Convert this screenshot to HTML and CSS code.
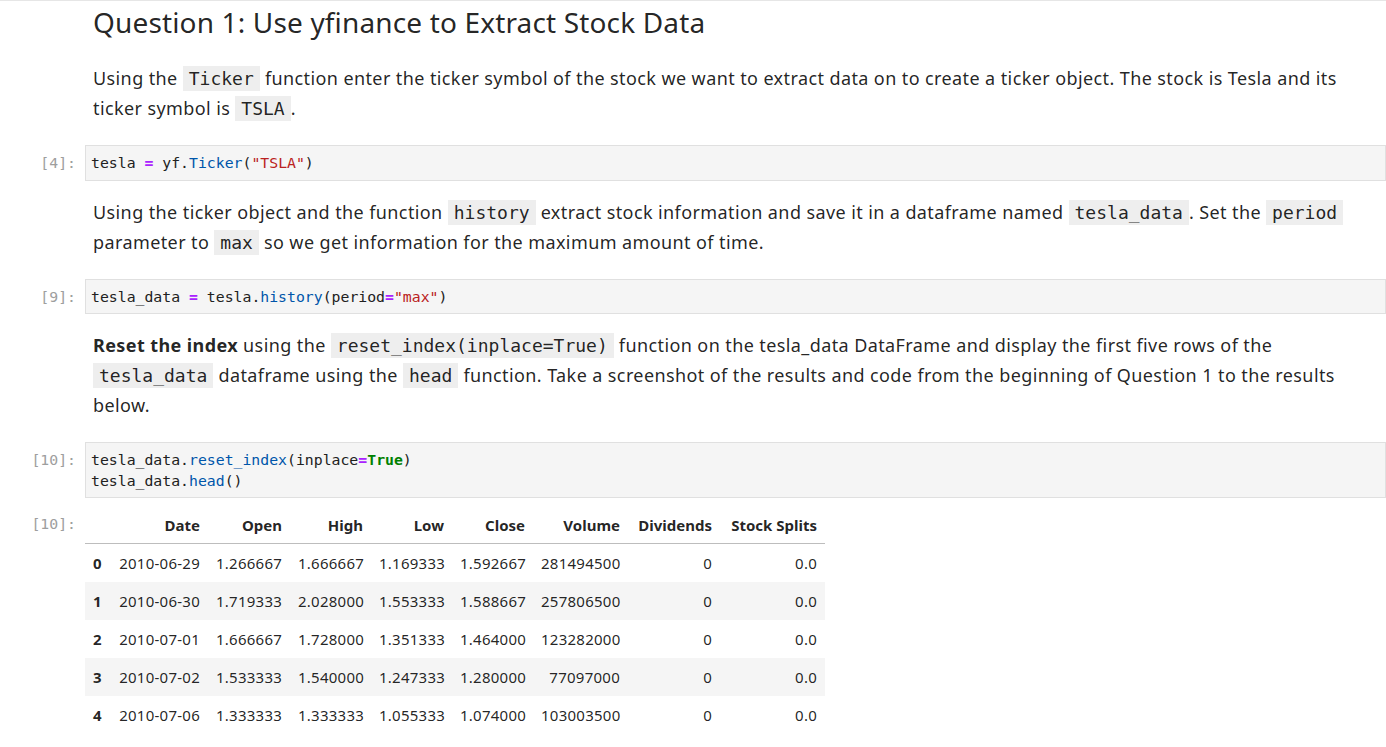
FILE: index.html
```html
<!DOCTYPE html>
<html>
<head>
<meta charset="utf-8">
<link rel="stylesheet" href="styles.css">
</head>
<body>
<div class="notebook">
  <div class="cell md first">
    <div class="prompt"></div>
    <div class="content">
      <h2 class="title">Question 1: Use yfinance to Extract Stock Data</h2>
    </div>
  </div>

  <div class="cell md gap-lg">
    <div class="prompt"></div>
    <div class="content">
      <p>Using the <code>Ticker</code> function enter the ticker symbol of the stock we want to extract data on to create a ticker object. The stock is Tesla and its ticker symbol is <code>TSLA</code>.</p>
    </div>
  </div>

  <div class="cell code">
    <div class="prompt">[4]:</div>
    <div class="editor"><pre>tesla <span class="o">=</span> yf<span class="p">.</span><span class="f">Ticker</span>(<span class="s">"TSLA"</span>)</pre></div>
  </div>

  <div class="cell md">
    <div class="prompt"></div>
    <div class="content">
      <p>Using the ticker object and the function <code>history</code> extract stock information and save it in a dataframe named <code>tesla_data</code>. Set the <code>period</code> parameter to <code>max</code> so we get information for the maximum amount of time.</p>
    </div>
  </div>

  <div class="cell code">
    <div class="prompt">[9]:</div>
    <div class="editor"><pre>tesla_data <span class="o">=</span> tesla<span class="p">.</span><span class="f">history</span>(period<span class="o">=</span><span class="s">"max"</span>)</pre></div>
  </div>

  <div class="cell md">
    <div class="prompt"></div>
    <div class="content">
      <p><b>Reset the index</b> using the <code>reset_index(inplace=True)</code> function on the tesla_data DataFrame and display the first five rows of the <code>tesla_data</code> dataframe using the <code>head</code> function. Take a screenshot of the results and code from the beginning of Question 1 to the results below.</p>
    </div>
  </div>

  <div class="cell code">
    <div class="prompt">[10]:</div>
    <div class="editor"><pre>tesla_data<span class="p">.</span><span class="f">reset_index</span>(inplace<span class="o">=</span><span class="k">True</span>)
tesla_data<span class="p">.</span><span class="f">head</span>()</pre></div>
  </div>

  <div class="cell output">
    <div class="prompt out">[10]:</div>
    <div class="result">
      <table class="df">
        <colgroup>
          <col class="c-idx"><col class="c-date"><col class="c-num"><col class="c-num2"><col class="c-num2"><col class="c-num2"><col class="c-vol"><col class="c-div"><col class="c-split">
        </colgroup>
        <thead>
          <tr><th></th><th>Date</th><th>Open</th><th>High</th><th>Low</th><th>Close</th><th>Volume</th><th>Dividends</th><th>Stock Splits</th></tr>
        </thead>
        <tbody>
          <tr><th>0</th><td>2010-06-29</td><td>1.266667</td><td>1.666667</td><td>1.169333</td><td>1.592667</td><td>281494500</td><td>0</td><td>0.0</td></tr>
          <tr><th>1</th><td>2010-06-30</td><td>1.719333</td><td>2.028000</td><td>1.553333</td><td>1.588667</td><td>257806500</td><td>0</td><td>0.0</td></tr>
          <tr><th>2</th><td>2010-07-01</td><td>1.666667</td><td>1.728000</td><td>1.351333</td><td>1.464000</td><td>123282000</td><td>0</td><td>0.0</td></tr>
          <tr><th>3</th><td>2010-07-02</td><td>1.533333</td><td>1.540000</td><td>1.247333</td><td>1.280000</td><td>77097000</td><td>0</td><td>0.0</td></tr>
          <tr><th>4</th><td>2010-07-06</td><td>1.333333</td><td>1.333333</td><td>1.055333</td><td>1.074000</td><td>103003500</td><td>0</td><td>0.0</td></tr>
        </tbody>
      </table>
    </div>
  </div>
</div>
</body>
</html>
```

FILE: styles.css
```css
html, body {
  margin: 0;
  padding: 0;
  background: #ffffff;
}

body {
  font-family: "Noto Sans", "Open Sans", sans-serif;
  color: rgba(0, 0, 0, 0.87);
  overflow: hidden;
}

.notebook {
  border-top: 1px solid #e6e6e6;
  width: 1386px;
}

.cell {
  display: flex;
  align-items: flex-start;
}

.prompt {
  flex: 0 0 85px;
  width: 85px;
  box-sizing: border-box;
  padding-right: 9px;
  text-align: right;
  font-family: "DejaVu Sans Mono", monospace;
  font-size: 14.8px;
  line-height: 20.5px;
  color: #9e9e9e;
}

.content {
  flex: 1 1 auto;
  padding-left: 8px;
  padding-right: 20px;
  min-width: 0;
}

.title {
  margin: 4px 0 0 0;
  font-size: 28px;
  font-weight: 400;
  line-height: 34px;
  letter-spacing: 0.15px;
}

.md p {
  margin: 0;
  font-size: 18px;
  line-height: 30px;
  letter-spacing: 0.4px;
}

.md b {
  font-weight: 700;
}

.md code {
  font-family: "DejaVu Sans Mono", monospace;
  font-size: 18px;
  line-height: 20px;
  letter-spacing: 0;
  background: #eeeeee;
  padding: 2px 6px;
  color: rgba(0, 0, 0, 0.87);
}

.md {
  margin-top: 16px;
}

.md.first {
  margin-top: 0;
}

.md.gap-lg {
  margin-top: 24px;
}

.code {
  margin-top: 22px;
}

.code .prompt {
  padding-top: 8px;
}

.editor {
  flex: 1 1 auto;
  background: #f5f5f5;
  border: 1px solid #e0e0e0;
  padding: 7px 5px 6px 5px;
}

.editor pre {
  margin: 0;
  font-family: "DejaVu Sans Mono", monospace;
  font-size: 14.8px;
  line-height: 20.5px;
  color: #212121;
}

.o { color: #aa22ff; font-weight: 700; }
.f { color: #0055aa; }
.s { color: #ba2121; }
.k { color: #008000; font-weight: 700; }
.p { color: #212121; }

.output {
  margin-top: 9px;
}

.output .prompt {
  padding-top: 7px;
}

.result {
  flex: 1 1 auto;
}

.df {
  border-collapse: collapse;
  table-layout: fixed;
  width: 740px;
  font-size: 15px;
  letter-spacing: 0.25px;
  color: rgba(0, 0, 0, 0.87);
}

.c-idx { width: 25px; }
.c-date { width: 98px; }
.c-num { width: 82px; }
.c-num2 { width: 81px; }
.c-vol { width: 95px; }
.c-div { width: 92px; }
.c-split { width: 105px; }

.df th, .df td {
  padding: 0 8px;
  text-align: right;
  white-space: nowrap;
}

.df thead th {
  font-weight: 700;
  letter-spacing: 0;
  height: 36px;
  border-bottom: 1px solid #bdbdbd;
}

.df tbody th {
  font-weight: 700;
  text-align: left;
}

.df tbody tr {
  height: 38px;
}

.df tbody tr:nth-child(even) {
  background: #f5f5f5;
}
```
